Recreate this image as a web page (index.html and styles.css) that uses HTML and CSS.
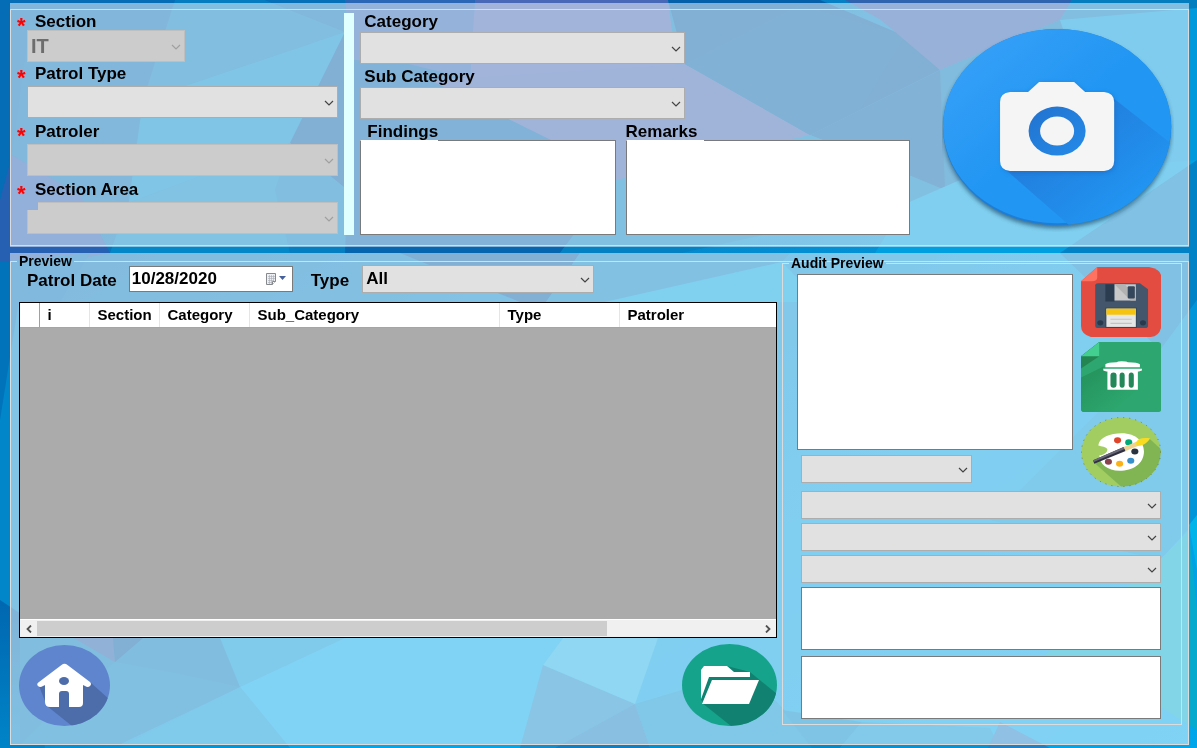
FILE: index.html
```html
<!DOCTYPE html>
<html lang="en">
<head>
<meta charset="utf-8">
<title>Patrol</title>
<link rel="stylesheet" href="styles.css">
</head>
<body>
<svg class="backdrop" viewBox="0 0 1197 748" preserveAspectRatio="none" aria-hidden="true">
  <defs>
    <linearGradient id="base" x1="0" y1="0" x2="1" y2="1">
      <stop offset="0" stop-color="#0567b1"/><stop offset=".35" stop-color="#0580c4"/><stop offset=".65" stop-color="#019be0"/><stop offset="1" stop-color="#00a6ea"/>
    </linearGradient>
    <linearGradient id="side" x1="0" y1="0" x2="0" y2="1">
      <stop offset="0" stop-color="#0067b0"/><stop offset="1" stop-color="#0084c8"/>
    </linearGradient>
  </defs>
  <rect width="1197" height="748" fill="url(#base)"/>
  <polygon points="0,0 175,0 143,118 130,203 12,155 0,200" fill="#056db5"/>
  <polygon points="12,155 30,20 143,118 130,203 80,195" fill="#0571b8"/>
  <polygon points="175,0 265,0 345,32 143,100" fill="#057cc0"/>
  <polygon points="143,100 345,32 290,143 128,208" fill="#008bcc"/>
  <polygon points="265,0 400,0 345,32" fill="#0570b8"/>
  <polygon points="345,32 290,143 345,188 400,90" fill="#055fa9"/>
  <polygon points="128,203 290,143 345,188 340,253 110,253" fill="#047dc1"/>
  <polygon points="128,203 290,143 275,190 290,253 110,253" fill="#0487c8"/>
  <polygon points="0,200 12,155 80,195 110,253 60,262 0,262" fill="#2560b2"/>
  <polygon points="345,0 475,0 470,80 400,90 352,60" fill="#2a66b5"/>
  <polygon points="352,60 400,62 475,80 615,180 560,253 345,253" fill="#0565ae"/>
  <polygon points="475,0 668,0 672,31 685,64 470,82" fill="#4769b7"/>
  <polygon points="430,80 685,64 810,135 617,180 551,140" fill="#4068b5"/>
  <polygon points="668,0 820,0 905,36 940,70 810,135 685,64" fill="#0560aa"/>
  <polygon points="685,64 800,5 905,36 860,110 810,135" fill="#0563ac"/>
  <polygon points="845,0 1072,0 1060,20 940,70 881,20" fill="#2f63b0"/>
  <polygon points="940,70 1060,20 1197,140 945,190 900,175" fill="#0377ba"/>
  <polygon points="810,135 940,70 945,190 909,175" fill="#0567ad"/>
  <polygon points="1060,20 1072,0 1197,0 1197,15" fill="#037dbe"/>
  <polygon points="1060,20 1197,8 1197,170 1120,200" fill="#0099dc"/>
  <polygon points="617,180 810,135 945,190 905,204 640,262 560,253" fill="#0481c2"/>
  <polygon points="905,204 960,180 1197,160 1060,253 875,253" fill="#009fe0"/>
  <polygon points="1060,253 1197,160 1197,330 1160,350" fill="#0282c6"/>
  <polygon points="400,253 580,253 546,302 520,302" fill="#055fa9"/>
  <polygon points="580,253 790,253 782,262 607,302 546,302" fill="#0582c3"/>
  <polygon points="782,262 820,302 600,303" fill="#00a0e1"/>
  <polygon points="0,262 90,253 60,302 30,330 0,420" fill="#0073bb"/>
  <polygon points="0,420 19,300 19,640 0,600" fill="#0086c9"/>
  <polygon points="0,600 30,620 45,748 0,748" fill="url(#side)"/>
  <polygon points="20,630 220,630 240,687 118,745 20,745" fill="#037bbd"/>
  <polygon points="60,630 113,630 115,662" fill="#2362ae"/>
  <polygon points="113,638 143,638 115,662" fill="#045fa8"/>
  <polygon points="115,662 175,673 240,687 118,745 20,745 45,720" fill="#0481c2"/>
  <polygon points="220,638 350,630 340,643 240,687" fill="#0094d6"/>
  <polygon points="240,687 345,638 563,638 543,665 520,748 290,748" fill="#00a6ea"/>
  <polygon points="240,687 290,748 118,748" fill="#0095d7"/>
  <polygon points="543,665 635,704 555,748 520,748" fill="#148bcb"/>
  <polygon points="635,704 682,690 775,700 820,748 650,748" fill="#028fcf"/>
  <polygon points="635,704 650,748 555,748" fill="#127ec2"/>
  <polygon points="658,638 563,638 543,665 635,704" fill="#1eafe5"/>
  <polygon points="782,710 812,748 840,748 862,722" fill="#0189ca"/>
  <polygon points="862,722 990,728 1000,748 840,748" fill="#0492d4"/>
  <polygon points="1000,722 1050,748 988,748" fill="#2080c6"/>
  <polygon points="1160,350 1197,300 1197,520 1160,560 990,520" fill="#0095d9"/>
  <polygon points="1189,525 1197,515 1197,570" fill="#00b4e9"/>
  <polygon points="1045,655 1160,560 1189,530 1197,610 1197,730 1150,700" fill="#05aacd"/>
</svg>

<svg width="0" height="0" class="defs" aria-hidden="true">
  <symbol id="chevron" viewBox="0 0 10 6"><path d="M1 1 L5 5 L9 1" fill="none" stroke="currentColor" stroke-width="1.2"/></symbol>
</svg>

<main class="page">
  <section class="panel entry-panel">
    <div class="entry">
      <div class="column identity">
        <div class="field first">
          <label class="required" for="section">Section</label>
          <div class="combo short"><select id="section" class="large" disabled><option>IT</option></select><svg><use href="#chevron"/></svg></div>
        </div>
        <div class="field">
          <label class="required" for="ptype">Patrol Type</label>
          <div class="combo"><select id="ptype"><option></option></select><svg><use href="#chevron"/></svg></div>
        </div>
        <div class="field">
          <label class="required" for="patroler">Patroler</label>
          <div class="combo"><select id="patroler" disabled><option></option></select><svg><use href="#chevron"/></svg></div>
        </div>
        <div class="field">
          <label class="required" for="area">Section Area</label>
          <div class="combo notched"><select id="area" disabled><option></option></select><svg><use href="#chevron"/></svg></div>
        </div>
      </div>
      <div class="divider"></div>
      <div class="column details">
        <div class="field medium">
          <label for="category">Category</label>
          <div class="combo"><select id="category"><option></option></select><svg><use href="#chevron"/></svg></div>
        </div>
        <div class="field medium">
          <label for="sub">Sub Category</label>
          <div class="combo"><select id="sub"><option></option></select><svg><use href="#chevron"/></svg></div>
        </div>
        <div class="notes">
          <div class="field note findings"><label for="findings">Findings</label><textarea id="findings"></textarea></div>
          <div class="field note remarks"><label for="remarks">Remarks</label><textarea id="remarks"></textarea></div>
        </div>
      </div>
      <button class="icon-button camera" aria-label="Take photo">
        <svg viewBox="0 0 232 204">
          <defs>
            <linearGradient id="cam" x1="0" y1="0" x2="1" y2="1"><stop offset="0" stop-color="#3ba2f8"/><stop offset=".5" stop-color="#2196f3"/><stop offset="1" stop-color="#2196f3"/></linearGradient>
            <linearGradient id="camshade" x1=".3" y1=".3" x2=".8" y2=".8"><stop offset="0" stop-color="#227fde"/><stop offset="1" stop-color="#2196f3"/></linearGradient>
            <linearGradient id="ring" x1="0" y1="0" x2="1" y2="1"><stop offset="0" stop-color="#2272cf"/><stop offset="1" stop-color="#258be9"/></linearGradient>
            <filter id="soft" x="-10%" y="-10%" width="120%" height="120%"><feGaussianBlur stdDeviation="2"/></filter>
            <clipPath id="camclip"><ellipse cx="115" cy="99" rx="114" ry="98"/></clipPath>
          </defs>
          <ellipse cx="115" cy="102" rx="114" ry="98" fill="#24506f" opacity=".7" filter="url(#soft)"/>
          <ellipse cx="115" cy="99" rx="114" ry="98" fill="#1d7ed8"/>
          <ellipse cx="115" cy="98" rx="114" ry="97" fill="url(#cam)"/>
          <path clip-path="url(#camclip)" d="M64 142 L171 70 L232 118 V204 H135 Z" fill="url(#camshade)"/>
          <path d="M70 65 H86 L98 55 H131 L144 65 H162 Q173 66 173 75 V134 Q173 144 162 145 H70 Q60 144 60 134 V75 Q60 66 70 65Z" fill="#1b67bd" opacity=".6" filter="url(#soft)"/>
          <path d="M68 64 H86 L97 54 H132 L143 64 H162 Q172 65 172 74 V133 Q172 142 162 143 H68 Q58 142 58 133 V74 Q58 65 68 64Z" fill="#f5f5f5"/>
          <ellipse cx="115" cy="103" rx="28.500" ry="24.500" fill="url(#ring)"/>
          <ellipse cx="115" cy="103" rx="17" ry="14.500" fill="#f5f5f5"/>
        </svg>
      </button>
    </div>
  </section>

  <section class="panel preview-panel">
    <fieldset class="preview">
      <legend>Preview</legend>
      <div class="split">
        <div class="records">
          <div class="filters">
            <label for="date">Patrol Date</label>
            <div class="date-box">
              <input id="date" type="text" value="10/28/2020">
              <button aria-label="Open calendar">
                <svg width="22" height="14" viewBox="0 0 22 14">
                  <path d="M1.500 1.500 H10.500 V9.500 L7.500 12.500 H1.500Z" fill="#eef0f3" stroke="#85888c"/>
                  <path d="M3 4.500H10M3 6.500H10M3 8.500H9M3 10.500H7M4.500 3V12M6.500 3V12M8.500 3V10" stroke="#a7abb5" stroke-width=".6"/>
                  <path d="M7.500 12.500V9.500H10.500" fill="#fff" stroke="#85888c"/>
                  <path d="M14 4 H21 L17.500 8Z" fill="#45609b"/>
                </svg>
              </button>
            </div>
            <label class="type-label" for="type">Type</label>
            <div class="combo filter"><select id="type"><option>All</option></select><svg><use href="#chevron"/></svg></div>
          </div>
          <div class="grid">
            <table>
              <colgroup><col class="c-mark"><col class="c-i"><col class="c-section"><col class="c-category"><col class="c-sub"><col class="c-type"><col></colgroup>
              <thead><tr><th></th><th>i</th><th>Section</th><th>Category</th><th>Sub_Category</th><th>Type</th><th>Patroler</th></tr></thead>
            </table>
            <div class="scrollbar">
              <button aria-label="Scroll left"><svg width="8" height="8" viewBox="0 0 8 8"><path d="M6 0.500 L2.500 4 L6 7.500" fill="none" stroke="#505050" stroke-width="1.800"/></svg></button>
              <div class="track"><div class="thumb"></div></div>
              <button aria-label="Scroll right"><svg width="8" height="8" viewBox="0 0 8 8"><path d="M2 0.500 L5.500 4 L2 7.500" fill="none" stroke="#505050" stroke-width="1.800"/></svg></button>
            </div>
          </div>
          <div class="actions">
            <button class="icon-button home" aria-label="Home">
              <svg viewBox="0 0 91 81">
                <defs><clipPath id="homeclip"><ellipse cx="45.500" cy="40.500" rx="45.500" ry="40.500"/></clipPath></defs>
                <g clip-path="url(#homeclip)">
                  <rect width="91" height="81" fill="#5f85ce"/>
                  <path d="M20 41 L71 37 L91 55 V81 H53 L28 61Z" fill="#4d6caa"/>
                </g>
                <path d="M42.500 20 Q45.500 17.500 48.500 20 L71 37 Q73 39 71 41 Q69 43 66 41 L64 40 V58 Q64 62 60 62 H50 V49 Q50 46 47 46 H43 Q40 46 40 49 V62 H31 Q26 62 26 57 V40 L24 41 Q21 43 19 41 Q17 39 20 37Z" fill="#fff"/>
                <ellipse cx="45" cy="36" rx="5" ry="4" fill="#4d6caa"/>
              </svg>
            </button>
            <button class="icon-button folder" aria-label="Open folder">
              <svg viewBox="0 0 95 82">
                <defs><clipPath id="folderclip"><ellipse cx="47.500" cy="41" rx="47.500" ry="41"/></clipPath></defs>
                <g clip-path="url(#folderclip)">
                  <rect width="95" height="82" fill="#16a38c"/>
                  <path d="M45 22 L68 28 L95 50 V82 H49 L20 59Z" fill="#118271"/>
                </g>
                <path d="M27 33 H68 V36 H30 L21 58 L19 56Z" fill="#118271"/>
                <path d="M19 55 V26 L22 22 H45 L52 28 H68 V33 H27Z" fill="#fff"/>
                <path d="M30 36 H77 L67 60 H20Z" fill="#fff"/>
              </svg>
            </button>
          </div>
        </div>

        <fieldset class="audit">
          <legend>Audit Preview</legend>
          <div class="audit-body">
            <div class="audit-top">
              <div class="audit-main">
                <textarea class="picture" aria-label="Audit picture"></textarea>
                <div class="combo small narrow"><select aria-label="Audit section"><option></option></select><svg><use href="#chevron"/></svg></div>
              </div>
              <div class="tools">
                <button class="icon-button" aria-label="Save">
                  <svg viewBox="0 0 79 69">
                    <path d="M16 0 H67 Q79 2 79 10 V59 Q77 69 67 69 H10 Q0 66 0 58 V14Z" fill="#e34c40"/>
                    <path d="M16 0 V10 Q16 14 11 14 H0Z" fill="#ff7161"/>
                    <path d="M14 18 Q14 16 17 16 H58 L66 22 V58 Q66 60 63 60 H16 Q14 60 14 58Z" fill="#43566c"/>
                    <rect x="24" y="17" width="9" height="17" fill="#2c3c50"/>
                    <rect x="33" y="17" width="21" height="16" fill="#c9c9c9"/>
                    <path d="M33 17 H43 L54 30 V33 H49Z" fill="#b2b2b2"/>
                    <rect x="46" y="19" width="7" height="12" rx="1" fill="#34465b"/>
                    <rect x="24" y="40" width="31" height="20" fill="#33465a"/>
                    <rect x="25" y="41" width="29" height="18" fill="#e6e6e6"/>
                    <rect x="25" y="41" width="29" height="6" fill="#f6c40f"/>
                    <path d="M29 51.500H50M29 55.500H50" stroke="#c3c3c3"/>
                    <ellipse cx="19" cy="55" rx="3" ry="2.500" fill="#29394d"/><ellipse cx="61" cy="55" rx="3" ry="2.500" fill="#29394d"/>
                  </svg>
                </button>
                <button class="icon-button" aria-label="Delete">
                  <svg viewBox="0 0 79 69">
                    <defs><linearGradient id="binshade" x1="0" y1="0" x2="1" y2="1"><stop offset="0" stop-color="#24905a"/><stop offset=".8" stop-color="#2da76f"/></linearGradient></defs>
                    <path d="M18 0 H76 Q79 0 79 3 V66 Q79 69 76 69 H3 Q0 69 0 66 V14Z" fill="#2da76f"/>
                    <path d="M0 35 L22 24 L56 47 L30 69 H3 Q0 69 0 66Z" fill="url(#binshade)"/>
                    <path d="M18 0 V14 L0 26 V14Z" fill="#238652"/>
                    <path d="M18 0 V14 H0Z" fill="#43cf8f"/>
                    <path d="M24 25 V22 Q26 20 35 20 Q36 19 40 19 Q45 19 46 20 Q56 20 58 22 V25Z M22 26 H60 V28 L57 29 H25 L22 28Z M26 29 H56 V47 H26Z" fill="#fff"/>
                    <path d="M22 25.500H60" stroke="#2da76f"/>
                    <rect x="29" y="30" width="6" height="15" rx="3" fill="#24875a"/><rect x="38" y="30" width="5" height="15" rx="3" fill="#24875a"/><rect x="47" y="30" width="5" height="15" rx="3" fill="#24875a"/>
                  </svg>
                </button>
                <button class="icon-button" aria-label="Edit drawing">
                  <svg viewBox="0 0 79 69">
                    <defs><clipPath id="palclip"><ellipse cx="39.500" cy="34.500" rx="39" ry="34"/></clipPath></defs>
                    <g clip-path="url(#palclip)">
                      <rect width="79" height="69" fill="#a2cd61"/>
                      <path d="M13 45 L67 21 L79 32 V69 H40Z" fill="#81b554"/>
                    </g>
                    <ellipse cx="39.500" cy="34.500" rx="39" ry="34" fill="none" stroke="#5f7942" stroke-width=".8" stroke-dasharray="1 5"/>
                    <path d="M17 28 C18 20 29 16 40 16 C55 16 62 25 62 34 C62 46 51 53 38 53 C26 53 18 46 18 38 C23 37 26 35 26 32 C25 29 20 29 17 28Z" fill="#fff"/>
                    <ellipse cx="36" cy="23" rx="3.500" ry="3" fill="#df452b"/><ellipse cx="47" cy="25" rx="3.500" ry="3" fill="#00a878"/><ellipse cx="53" cy="34" rx="3.500" ry="3" fill="#2c3340"/><ellipse cx="49" cy="43" rx="3.500" ry="3" fill="#398fc9"/><ellipse cx="38" cy="46" rx="3.500" ry="3" fill="#fcb215"/><ellipse cx="27" cy="44" rx="3.500" ry="3" fill="#89434c"/>
                    <path d="M12 42.500 L42 29.500 L44 33.500 L13 46Z" fill="#302f3f"/><path d="M12 42.500 L42 29.500 L43 31.500 L12 44.500Z" fill="#686879"/>
                    <path d="M42 29.500 L54 24.500 L56 28.500 L44 33.500Z" fill="#efd290"/>
                    <path d="M54 25 C56 21 61 20 68 21 C66 25 61 29 55 28.500Z" fill="#f9dc22"/>
                  </svg>
                </button>
              </div>
            </div>
            <div class="audit-fields">
              <div class="combo small"><select aria-label="Audit category"><option></option></select><svg><use href="#chevron"/></svg></div>
              <div class="combo small"><select aria-label="Audit sub category"><option></option></select><svg><use href="#chevron"/></svg></div>
              <div class="combo small"><select aria-label="Audit patroler"><option></option></select><svg><use href="#chevron"/></svg></div>
              <textarea aria-label="Audit findings"></textarea>
              <textarea class="last" aria-label="Audit remarks"></textarea>
            </div>
          </div>
        </fieldset>
      </div>
    </fieldset>
  </section>
</main>
</body>
</html>
```
FILE: styles.css
```css
* { box-sizing: border-box; }
body {
  margin: 0;
  background: #0090d4;
  color: #000;
  font: bold 17px/18px "Liberation Sans", Arial, sans-serif;
}
button, select, input, textarea { font: inherit; color: inherit; margin: 0; border-radius: 0; }
button { padding: 0; border: 0; background: none; }
svg { display: block; }
.defs { position: absolute; }
.backdrop { position: fixed; inset: 0; z-index: -1; width: 100%; height: 100%; }

.page { display: flex; flex-direction: column; gap: 6px; padding: 3px 8px 2px 10px; }
.panel { background: rgba(255, 255, 255, 0.5); }
.entry-panel { padding: 6px 0 1px; }
.entry { display: flex; padding: 2px 14px 10px 6px; border: 1px solid #dcdcdc; }

/* fields */
.column { display: flex; flex-direction: column; }
.identity { flex: 321 1 0; gap: 4px; margin-right: 6px; }
.identity .combo { margin-left: 10px; }
.field label { line-height: 20px; }
.identity label { padding: 0 0 2px; }
.first { margin-bottom: -2px; }
.identity .first label { height: 18px; padding-bottom: 0; }
.required { display: flex; }
.required::before { content: "*"; width: 18px; height: 18px; color: #f00; font-size: 22px; line-height: 28px; }
.field { display: flex; flex-direction: column; }
.combo { position: relative; height: 32px; }
.combo select {
  display: block; width: 100%; height: 100%; padding: 0 24px 0 3px;
  appearance: none; background: #e1e1e1; border: 1px solid #adadad; opacity: 1;
}
.combo select:disabled { background: #ccc; border-color: #bfbfbf; color: #6d6d6d; }
.combo svg { position: absolute; right: 4px; top: 50%; width: 10px; height: 6px; margin-top: -2px; color: #444; pointer-events: none; }
.combo select:disabled + svg { color: #a0a0a0; }
.combo .large { font-size: 20px; }
.short { width: 158px; }
.notched { clip-path: polygon(11px 0, 100% 0, 100% 100%, 0 100%, 0 8px, 11px 8px); }
.small { height: 28px; }
.divider { width: 10px; margin: 1px 6px 0 0; background: #e0ffff; }

.details { flex: 549 1 0; gap: 3px; }
.details label { padding: 0 4px; }
.medium { width: 59%; }
.notes { display: flex; gap: 10px; }
.details .note label { height: 18px; }
.details .findings label { padding-left: 7px; }
.details .remarks label { padding-left: 0; }
.findings { flex: 255 1 0; }
.remarks { flex: 284 1 0; }
textarea { display: block; width: 100%; resize: none; background: #fff; border: 1px solid #7a7a7a; padding: 3px; }
.note textarea {
  height: 95px; border-top-color: transparent;
  background: linear-gradient(#7a7a7a, #7a7a7a) 78px 0 / 100% 1px no-repeat border-box, #fff;
}

.icon-button { display: block; cursor: pointer; }
.icon-button svg { width: 100%; height: auto; }
.camera { flex: 232 1 0; align-self: flex-start; margin: 16px 0 0 32px; }

/* preview */
fieldset { min-width: 0; margin: 0; padding: 0; border: 1px solid #dcdcdc; }
legend { padding: 0 2px; font-size: 14px; line-height: 16px; }
.preview > legend { margin-left: 6px; }
.audit > legend { margin-left: 6px; }
.split {
  display: grid; grid-template-columns: minmax(0, 758fr) minmax(0, 400fr);
  align-items: start; gap: 5px; padding: 0 6px 18px 8px; margin-top: -14px;
}
.records { padding-top: 10px; }
.filters { display: flex; align-items: center; height: 28px; padding-left: 8px; }
.filters label { padding-top: 4px; }
.date-box { display: flex; align-items: center; width: 164px; height: 26px; margin-left: 12px; padding: 0 5px 0 2px; background: #fff; border: 1px solid #7a7a7a; }
.date-box input { flex: 1; min-width: 0; padding: 0; border: 0; background: none; }
.filters .type-label { margin: 0 13px 0 18px; }
.filter { width: 232px; height: 28px; }
.grid { display: flex; flex-direction: column; height: 336px; margin: 9px 0 6px; background: #ababab; border: 1px solid #000; }
table { width: 100%; border-collapse: collapse; table-layout: fixed; font-size: 15px; background: #fff; }
th { height: 24px; padding: 1px 0 0 8px; border-right: 1px solid #e5e5e5; border-bottom: 1px solid #a5a5a5; text-align: left; line-height: 20px; }
th:first-child { border-right-color: #a0a0a0; }
th:last-child { border-right: 0; }
.c-mark { width: 19px; }
.c-i { width: 50px; }
.c-section { width: 70px; }
.c-category { width: 90px; }
.c-sub { width: 250px; }
.c-type { width: 120px; }
.scrollbar { display: flex; height: 18px; margin-top: auto; border-top: 1px solid #fff; background: #f0f0f0; }
.scrollbar button { display: grid; place-items: center; width: 17px; }
.track { flex: 1; }
.thumb { width: 79%; height: 15px; margin-top: 1px; background: #cdcdcd; }
.actions { display: flex; justify-content: space-between; }
.home { width: 91px; margin-top: 1px; }
.folder { width: 95px; }

.audit-body { padding: 0 20px 5px 14px; }
.audit-top { display: grid; grid-template-columns: minmax(0, 275fr) minmax(0, 80fr); align-items: start; gap: 8px; margin-top: -4px; }
.audit-main { padding-top: 7px; }
.picture { height: 176px; margin-bottom: 5px; }
.narrow { width: 62%; margin-left: 4px; }
.tools { display: flex; flex-direction: column; gap: 5px; }
.audit-fields { display: flex; flex-direction: column; gap: 4px; padding: 4px 0 0 4px; }
.audit-fields textarea { height: 63px; }
.audit-fields .last { margin-top: 2px; }
```
